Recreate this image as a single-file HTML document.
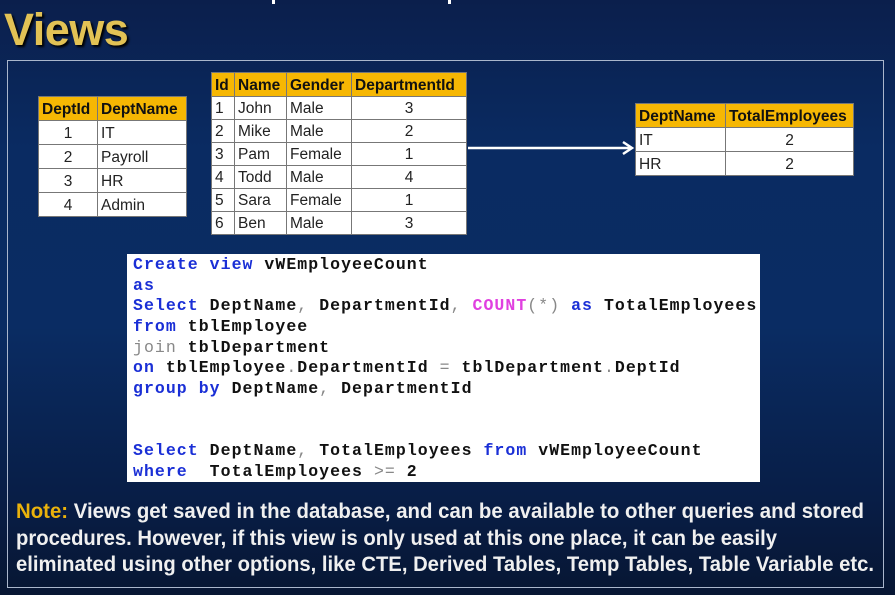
<!DOCTYPE html>
<html><head><meta charset="utf-8"><style>
body{margin:0;width:895px;height:595px;overflow:hidden;background:linear-gradient(180deg,#0b1f4c 0%,#0a2b62 25%,#0a2c63 55%,#081d45 85%,#071633 100%);position:relative;font-family:"Liberation Sans",sans-serif}
.title{position:absolute;left:4px;top:4px;font:bold 45px "Liberation Sans",sans-serif;color:#e2c255;text-shadow:2px 2px 2px #000;letter-spacing:-0.5px}
.frame{position:absolute;left:7px;top:60px;width:877px;height:528px;border:1.5px solid #aab6cc;box-sizing:border-box}
table{position:absolute;border-collapse:collapse;background:#fff;font-size:15.5px;color:#222}
td,th{border:1px solid #777;padding:2px 3px 0 3px;height:21px;line-height:21px;white-space:nowrap;box-sizing:border-box}
th{background:#f6b703;font-weight:bold;text-align:left;color:#111}
.emp td{height:23px;line-height:20px;padding-top:2px}
.c{text-align:center}
.code{position:absolute;left:127px;top:254px;width:633px;height:228px;background:#fff;font:bold 16.5px "Liberation Mono",monospace;letter-spacing:1.05px;color:#111;padding:1px 0 0 6px;box-sizing:border-box}
.code div{height:20.7px;line-height:20.7px;white-space:pre}
.k{color:#1a2fd6}.g{color:#888;font-weight:normal}.p{color:#e040e0}
</style></head><body>
<div style="position:absolute;left:272px;top:0;width:3px;height:4px;background:#fff"></div>
<div style="position:absolute;left:448px;top:0;width:3px;height:4px;background:#fff"></div>
<div class="title">Views</div>
<div class="frame"></div>
<table style="left:38px;top:96px;width:149px">
<tr><th style="width:59px">DeptId</th><th>DeptName</th></tr>
<tr><td class="c">1</td><td>IT</td></tr>
<tr><td class="c">2</td><td>Payroll</td></tr>
<tr><td class="c">3</td><td>HR</td></tr>
<tr><td class="c">4</td><td>Admin</td></tr>
</table>
<table class="emp" style="left:211px;top:72px;width:256px">
<tr><th style="width:23px">Id</th><th style="width:52px">Name</th><th style="width:65px">Gender</th><th>DepartmentId</th></tr>
<tr><td>1</td><td>John</td><td>Male</td><td class="c">3</td></tr>
<tr><td>2</td><td>Mike</td><td>Male</td><td class="c">2</td></tr>
<tr><td>3</td><td>Pam</td><td>Female</td><td class="c">1</td></tr>
<tr><td>4</td><td>Todd</td><td>Male</td><td class="c">4</td></tr>
<tr><td>5</td><td>Sara</td><td>Female</td><td class="c">1</td></tr>
<tr><td>6</td><td>Ben</td><td>Male</td><td class="c">3</td></tr>
</table>
<svg style="position:absolute;left:466px;top:140px" width="172" height="16"><line x1="2" y1="8" x2="165" y2="8" stroke="#fff" stroke-width="2.5"/><polyline points="157,2 166,8 157,14" fill="none" stroke="#fff" stroke-width="2.5"/></svg>
<table style="left:635px;top:103px;width:219px">
<tr><th style="width:90px">DeptName</th><th>TotalEmployees</th></tr>
<tr><td>IT</td><td class="c">2</td></tr>
<tr><td>HR</td><td class="c">2</td></tr>
</table>
<div class="code">
<div><span class="k">Create view</span> vWEmployeeCount</div>
<div><span class="k">as</span></div>
<div><span class="k">Select</span> DeptName<span class="g">,</span> DepartmentId<span class="g">,</span> <span class="p">COUNT</span><span class="g">(*)</span> <span class="k">as</span> TotalEmployees</div>
<div><span class="k">from</span> tblEmployee</div>
<div><span class="g">join</span> tblDepartment</div>
<div><span class="k">on</span> tblEmployee<span class="g">.</span>DepartmentId <span class="g">=</span> tblDepartment<span class="g">.</span>DeptId</div>
<div><span class="k">group by</span> DeptName<span class="g">,</span> DepartmentId</div>
<div> </div><div> </div>
<div><span class="k">Select</span> DeptName<span class="g">,</span> TotalEmployees <span class="k">from</span> vWEmployeeCount</div>
<div><span class="k">where</span>  TotalEmployees <span class="g">&gt;=</span> 2</div>
</div>
<svg style="position:absolute;left:0;top:495px" width="895" height="90" font-family="Liberation Sans, sans-serif" font-weight="bold" font-size="21" fill="#f0f0f0">
<text x="16" y="23" textLength="848" lengthAdjust="spacingAndGlyphs"><tspan fill="#eab20c">Note:</tspan> Views get saved in the database, and can be available to other queries and stored</text>
<text x="16" y="50" textLength="761" lengthAdjust="spacingAndGlyphs">procedures. However, if this view is only used at this one place, it can be easily</text>
<text x="16" y="76" textLength="858" lengthAdjust="spacingAndGlyphs">eliminated using other options, like CTE, Derived Tables, Temp Tables, Table Variable etc.</text>
</svg>
</body></html>
